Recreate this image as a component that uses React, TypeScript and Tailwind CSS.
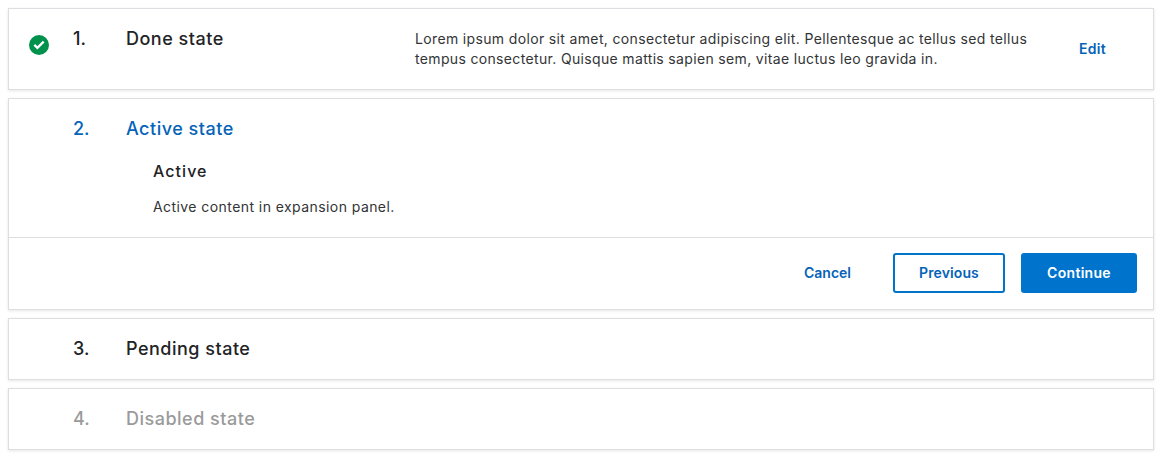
import type { ReactNode } from "react";

function Panel({ className = "", children }: { className?: string; children: ReactNode }) {
  return (
    <section
      className={`flex flex-col border border-[#dcdee1] bg-white shadow-[0_1px_3px_rgba(0,0,0,0.1)] ${className}`}
    >
      {children}
    </section>
  );
}

function Heading({ step, title, color }: { step: number; title: string; color: string }) {
  return (
    <div className={`flex text-[18px] leading-5 font-medium ${color}`}>
      <span className="w-[53px] shrink-0">{step}.</span>
      <h2 className="whitespace-nowrap tracking-[0.5px]">{title}</h2>
    </div>
  );
}

function CheckIcon() {
  return (
    <svg className="mt-1.5 size-5 shrink-0" viewBox="0 0 20 20" fill="none">
      <circle cx="10" cy="10" r="10" fill="#00914d" />
      <path d="M5.3 9.9 8.4 12.9 14.7 6.6" stroke="white" strokeWidth="2.3" />
    </svg>
  );
}

export default function App() {
  return (
    <main className="flex h-[466px] flex-col gap-2 bg-white p-2 font-['Inter',sans-serif] text-[#222325]">
      <Panel className="h-[82px]">
        <div className="flex pt-5 pl-5">
          <CheckIcon />
          <div className="ml-6 w-[342px] shrink-0">
            <Heading step={1} title="Done state" color="text-[#222325]" />
          </div>
          <p className="w-[664px] shrink-0 text-[14px] leading-5 whitespace-nowrap text-[#333436]">
            <span className="block tracking-[0.352px]">
              Lorem ipsum dolor sit amet, consectetur adipiscing elit. Pellentesque ac tellus sed tellus
            </span>
            <span className="block tracking-[0.34px]">
              tempus consectetur. Quisque mattis sapien sem, vitae luctus leo gravida in.
            </span>
          </p>
          <button className="h-10 pb-0.5 text-[14px] font-semibold tracking-[0.3px] text-[#0563b8]">Edit</button>
        </div>
      </Panel>

      <Panel className="h-[212px]">
        <div className="h-[138px] pt-5 pl-16">
          <Heading step={2} title="Active state" color="text-[#0563b8]" />
          <div className="pt-[22px] pl-20">
            <h3 className="text-[16px] leading-5 font-medium tracking-[1.05px]">Active</h3>
            <p className="mt-4 text-[14px] leading-5 tracking-[0.43px] text-[#333436]">
              Active content in expansion panel.
            </p>
          </div>
        </div>
        <div className="flex flex-1 items-start justify-end border-t border-[#dcdee1] pt-[15px] pr-4 text-[14px] font-semibold text-[#0563b8]">
          <button className="mr-4 h-10 w-[99px] pb-0.5">Cancel</button>
          <button className="mr-4 h-10 w-28 rounded-[3px] border-2 border-[#0074c8] pb-0.5 tracking-[0.1px]">Previous</button>
          <button className="h-10 w-[116px] rounded-[3px] bg-[#0074cc] pb-0.5 tracking-[0.3px] text-white">Continue</button>
        </div>
      </Panel>

      <Panel className="h-[62px] pt-5 pl-16">
        <Heading step={3} title="Pending state" color="text-[#222325]" />
      </Panel>

      <Panel className="h-[62px] pt-5 pl-16">
        <Heading step={4} title="Disabled state" color="text-[#9a9a9b]" />
      </Panel>
    </main>
  );
}
